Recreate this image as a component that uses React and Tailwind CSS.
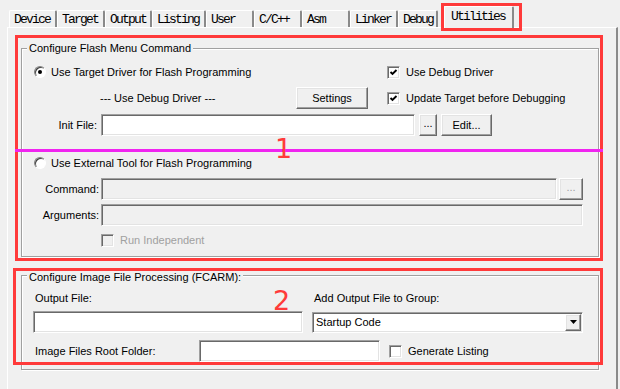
import React from "react";

const raised =
  "border border-t-white border-l-white border-b-[#696969] border-r-[#696969] shadow-[inset_-1px_-1px_0_#a0a0a0,inset_1px_1px_0_#e3e3e3] bg-[#f0f0f0]";
const sunken =
  "border border-t-[#a0a0a0] border-l-[#a0a0a0] border-b-white border-r-white shadow-[inset_1px_1px_0_#696969,inset_-1px_-1px_0_#e3e3e3]";

const tabs = [
  { label: "Device", w: "w-[48px]" },
  { label: "Target", w: "w-[48px]" },
  { label: "Output", w: "w-[47px]" },
  { label: "Listing", w: "w-[54px]" },
  { label: "User", w: "w-[48px]" },
  { label: "C/C++", w: "w-[48px]" },
  { label: "Asm", w: "w-[48px]" },
  { label: "Linker", w: "w-[48px]" },
  { label: "Debug", w: "w-[40px]" },
];

function Checkbox({ checked, disabled }) {
  return (
    <div
      className={
        "w-[13px] h-[13px] shrink-0 flex items-center justify-center " +
        sunken +
        (disabled ? " bg-[#f0f0f0]" : " bg-white")
      }
    >
      {checked && (
        <svg width="9" height="9" viewBox="0 0 9 9">
          <path d="M1.5 4 L3.5 6 L7.5 2" fill="none" stroke="#000" strokeWidth="1.9" />
        </svg>
      )}
    </div>
  );
}

function Radio({ checked }) {
  return (
    <div className="w-[12px] h-[12px] shrink-0 rounded-full border border-t-[#808080] border-l-[#808080] border-b-white border-r-white bg-white shadow-[inset_1px_1px_0_#404040] flex items-center justify-center">
      {checked && <div className="w-[4px] h-[4px] rounded-full bg-black" />}
    </div>
  );
}

function Button({ className, children, disabled }) {
  return (
    <div
      className={
        "flex items-center justify-center shrink-0 " +
        raised +
        " " +
        className +
        (disabled ? " text-[#a0a0a0]" : "")
      }
    >
      {children}
    </div>
  );
}

function Input({ className, disabled }) {
  return (
    <div
      className={
        "shrink-0 " + sunken + " " + className + (disabled ? " bg-[#f0f0f0]" : " bg-white")
      }
    />
  );
}

function Group({ title, className, legend, children }) {
  return (
    <div
      className={
        "w-[578px] border border-[#a0a0a0] shadow-[inset_1px_1px_0_#fff,1px_1px_0_#fff] " +
        className
      }
    >
      <div className={"ml-[5px] w-fit bg-[#f0f0f0] px-[2px] h-[14px] leading-[14px] " + legend}>
        {title}
      </div>
      {children}
    </div>
  );
}

export default function App() {
  return (
    <div className="relative w-[620px] h-[389px] overflow-hidden bg-[#f0f0f0] text-[11px] text-black font-['Liberation_Sans',Arial,sans-serif] flex flex-col">
      {/* tab strip */}
      <div className="flex items-end h-[27px] pl-[9px] shrink-0 font-['Liberation_Mono',monospace] text-[13px] tracking-[-1.8px]">
        {tabs.map((t) => (
          <div
            key={t.label}
            className={
              "h-[17px] flex items-center pl-[4px] border-l border-t border-white border-r-2 border-r-[#8a8a8a] rounded-t-[2px] leading-none " +
              t.w
            }
          >
            {t.label}
          </div>
        ))}
        <div className="relative z-10 -mb-px ml-[6px] w-[70px] h-[22px] flex items-center pl-[6px] pb-[2px] bg-[#f0f0f0] border-l border-t border-white border-r-2 border-r-[#8a8a8a] rounded-t-[2px] leading-none">
          Utilities
        </div>
      </div>

      {/* page */}
      <div className="ml-[7px] w-[611px] flex-1 border-l border-t border-white border-r-2 border-r-[#8a8a8a] pl-[13px] pt-[20px]">
        <Group title="Configure Flash Menu Command" className="pb-[9px]" legend="-mt-[8px]">
          <div className="flex items-center h-[14px] mt-[10px]">
            <div className="w-[365px] flex items-center pl-[12px] gap-[5px]">
              <Radio checked />
              <span>Use Target Driver for Flash Programming</span>
            </div>
            <div className="flex items-center gap-[6px]">
              <Checkbox checked />
              <span>Use Debug Driver</span>
            </div>
          </div>
          <div className="flex items-center h-[22px] mt-[8px]">
            <div className="w-[365px] flex items-center">
              <span className="w-[274px] pl-[78px]">--- Use Debug Driver ---</span>
              <Button className="w-[72px] h-[22px]">Settings</Button>
            </div>
            <div className="flex items-center gap-[6px]">
              <Checkbox checked />
              <span>Update Target before Debugging</span>
            </div>
          </div>
          <div className="flex items-center h-[22px] mt-[5px]">
            <span className="w-[75px] text-right">Init File:</span>
            <Input className="ml-[4px] w-[314px] h-[22px]" />
            <Button className="ml-[4px] w-[18px] h-[22px] items-end pb-[4px]">...</Button>
            <Button className="ml-[4px] w-[51px] h-[22px]">Edit...</Button>
          </div>
          <div className="flex items-center h-[14px] mt-[20px] pl-[12px] gap-[5px]">
            <Radio />
            <span>Use External Tool for Flash Programming</span>
          </div>
          <div className="flex items-center h-[22px] mt-[8px]">
            <span className="w-[77px] text-right">Command:</span>
            <Input className="ml-[2px] w-[456px] h-[22px]" disabled />
            <Button className="ml-[2px] w-[24px] h-[22px] items-end pb-[4px]" disabled>
              ...
            </Button>
          </div>
          <div className="flex items-center h-[22px] mt-[4px]">
            <span className="w-[77px] text-right">Arguments:</span>
            <Input className="ml-[2px] w-[482px] h-[22px]" disabled />
          </div>
          <div className="flex items-center h-[14px] mt-[7px] pl-[79px] gap-[6px]">
            <Checkbox disabled />
            <span className="text-[#a0a0a0]">Run Independent</span>
          </div>
        </Group>

        <Group
          title="Configure Image File Processing (FCARM):"
          className="mt-[18px] pb-[7px]"
          legend="-mt-[6px]"
        >
          <div className="flex items-center h-[14px] mt-[7px]">
            <span className="w-[292px] pl-[13px]">Output File:</span>
            <span>Add Output File to Group:</span>
          </div>
          <div className="flex items-center h-[22px] mt-[6px]">
            <Input className="ml-[11px] w-[270px] h-[22px]" />
            <div className={"ml-[9px] w-[271px] h-[21px] flex items-center bg-white " + sunken}>
              <span className="pl-[3px]">Startup Code</span>
              <div
                className={
                  "ml-auto mr-px w-[16px] h-[17px] flex items-center justify-center " + raised
                }
              >
                <svg width="7" height="4" viewBox="0 0 7 4">
                  <path d="M0 0 H7 L3.5 4 Z" fill="#000" />
                </svg>
              </div>
            </div>
          </div>
          <div className="flex items-center h-[22px] mt-[7px]">
            <span className="w-[177px] pl-[13px]">Image Files Root Folder:</span>
            <Input className="w-[181px] h-[22px]" />
            <div className="ml-[9px] flex items-center gap-[6px]">
              <Checkbox />
              <span>Generate Listing</span>
            </div>
          </div>
        </Group>
      </div>

      {/* annotations */}
      <div className="absolute left-[441px] top-[3px] w-[81px] h-[28px] border-[3px] border-[#ff3a3a] z-20" />
      <div className="absolute left-[15px] top-[35px] w-[588px] h-[226px] border-[3px] border-[#ff3a3a]" />
      <div className="absolute left-[15px] top-[149px] w-[588px] h-[3px] bg-[#f024f0]" />
      <div className="absolute left-[13px] top-[268px] w-[590px] h-[97px] border-[3px] border-[#ff3a3a]" />
      <span className="absolute left-[275px] top-[135px] text-[27px] leading-none text-[#ff3a3a] font-['DejaVu_Sans',sans-serif]">
        1
      </span>
      <span className="absolute left-[273px] top-[287px] text-[27px] leading-none text-[#ff3a3a] font-['DejaVu_Sans',sans-serif]">
        2
      </span>
    </div>
  );
}
